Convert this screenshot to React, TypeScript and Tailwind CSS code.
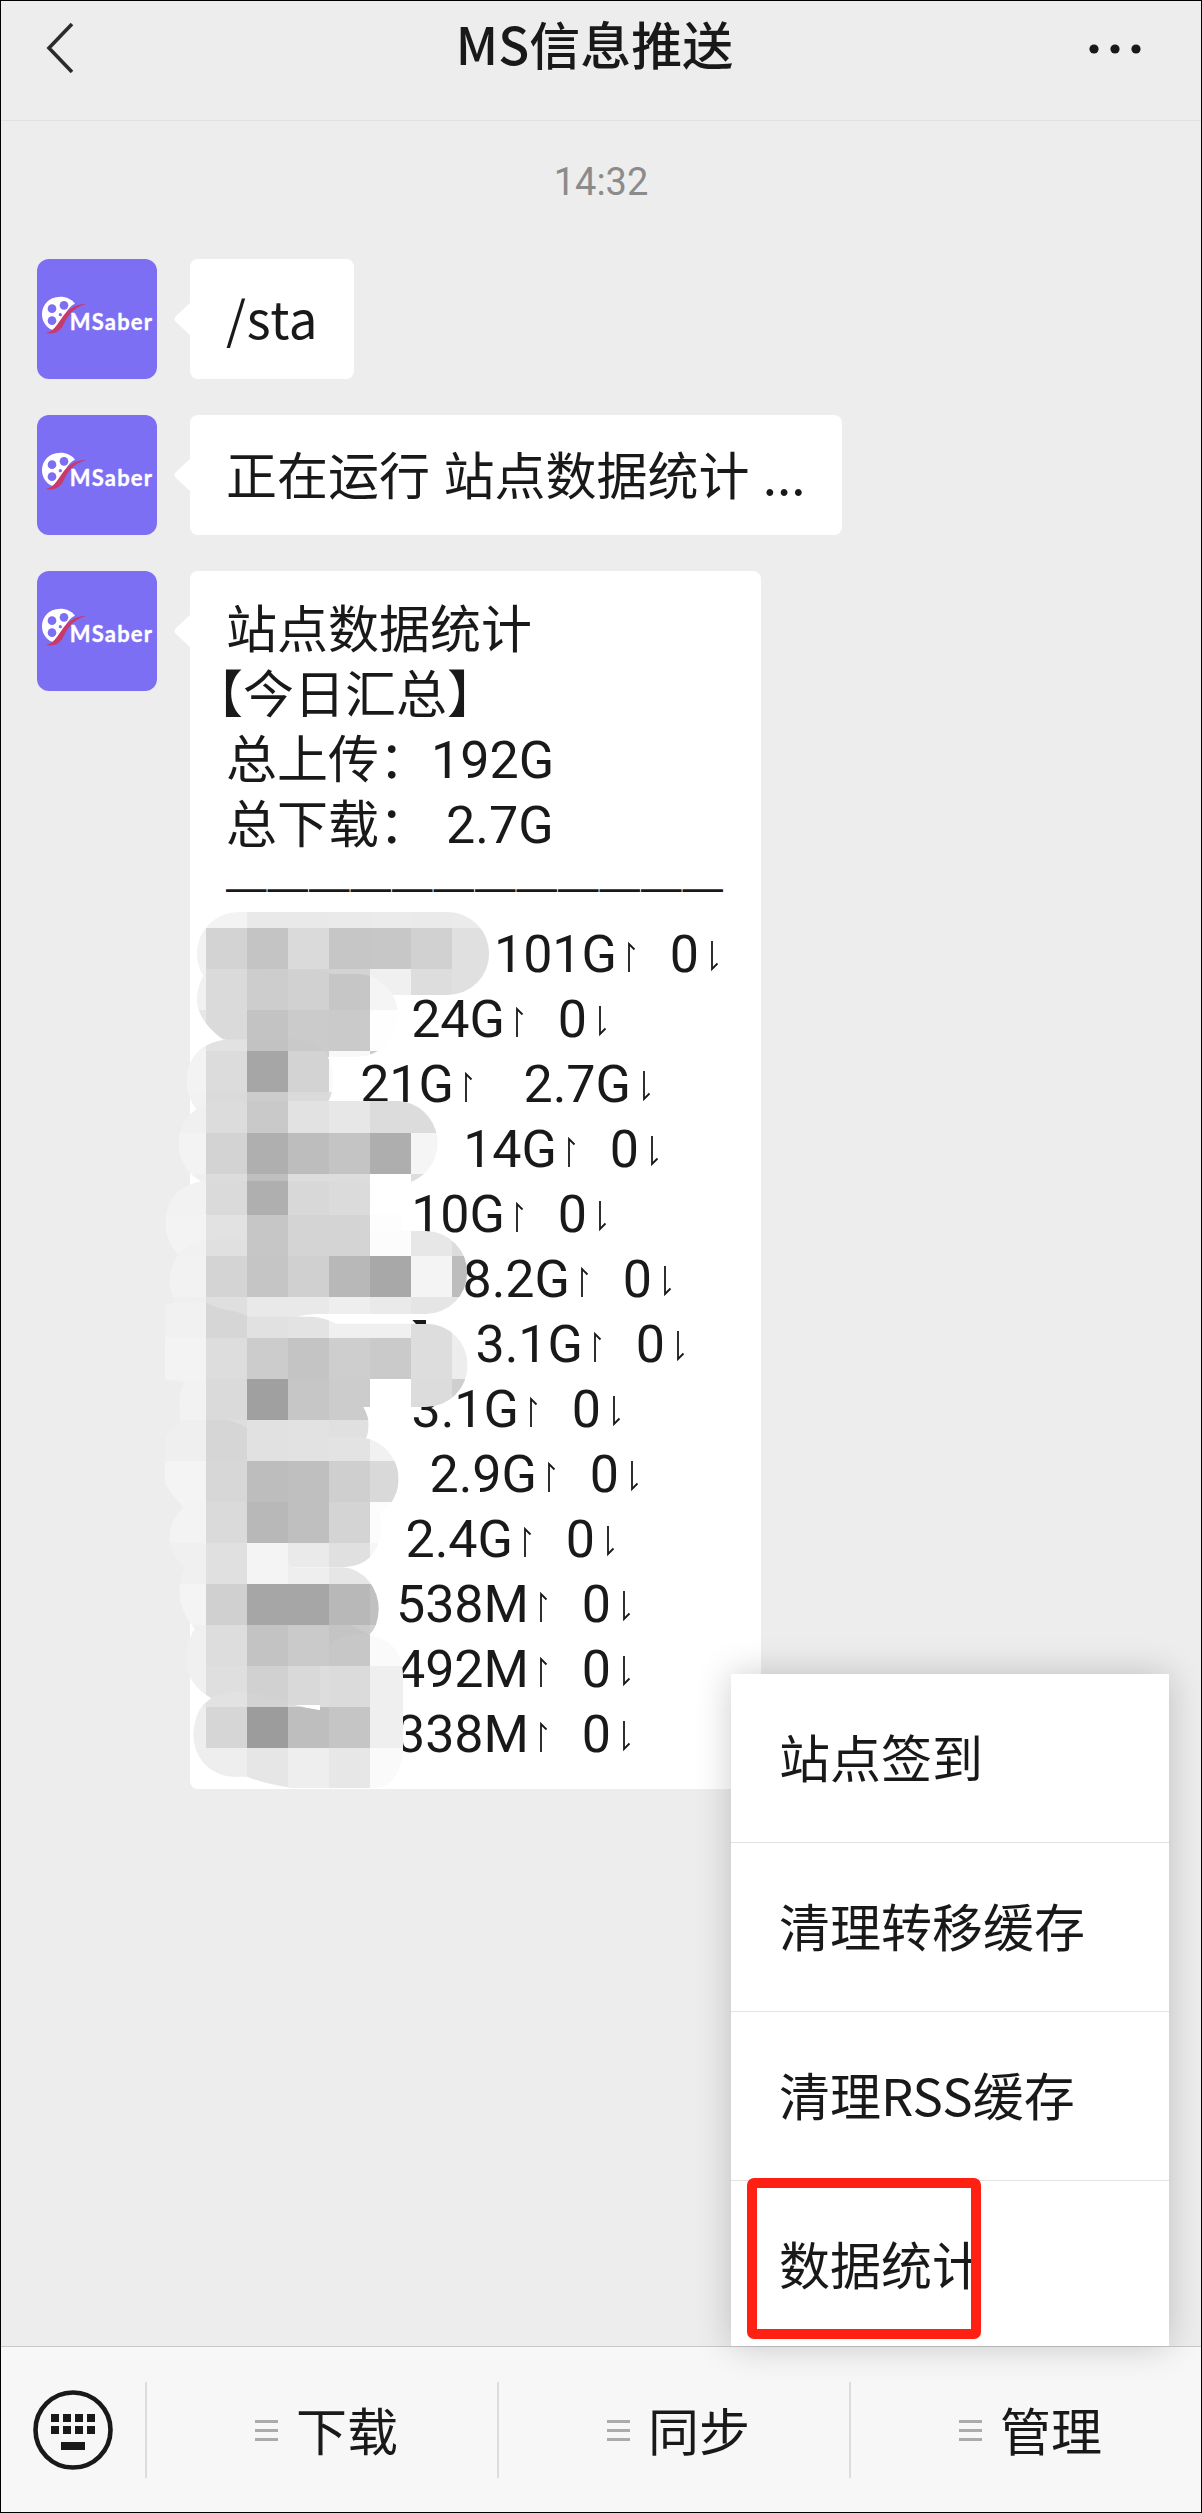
import React from "react";

type Stroke = { d: string; rows: [number, string][] };

/* Each row: [row index, two-digit grey levels for the eight columns]. */
const STROKES: Stroke[] = [
  {
    d: "M265 36H893A124.5 124.5 0 0 1 893 285H265A124.5 124.5 0 0 1 265 36Z",
    rows: [
      [0, "f3 f3 e9 e9 ea eb ea eb"],
      [1, "f2 d3 c4 da c6 c7 d1 e0"],
      [2, "f2 da ce d3 d3 f0 dd e0"],
    ],
  },
  {
    d: "M140 295Q145 250 160 228Q200 207 265 207L500 210Q530 214 545 222H620A124.5 124.5 0 0 1 620 471H530L218 418Q140 360 140 295Z",
    rows: [
      [2, "f1 da cd d1 c6 f5 ff ff"],
      [3, "e6 da c3 cb ca fe ff ff"],
      [4, "f2 dc c3 d0 f8 cc ff ff"],
    ],
  },
  {
    d: "M235 418H450Q500 425 530 465Q551 500 551 540Q549 580 535 604H400V640H150Q110 600 110 540Q115 430 235 418Z",
    rows: [
      [3, "f2 e2 c2 c9 ca ff ff ff"],
      [4, "f3 dc a6 d3 fa ff ff ff"],
      [5, "f2 da cc da dd ff ff ff"],
    ],
  },
  {
    d: "M214 603H746A126 126 0 0 1 783 846V860H214A128 128 0 0 1 214 603Z",
    rows: [
      [5, "f0 dc c9 e2 e7 dc dc ff"],
      [6, "f3 d3 af bd c4 ae f5 ff"],
      [7, "f0 dc bf dd dd ff dd ff"],
    ],
  },
  {
    d: "M168 842H783V860H755V1100H120Q46 1040 46 970Q50 855 168 842Z",
    rows: [
      [7, "f2 da af d8 db ff ff ff"],
      [8, "f3 e2 c6 d4 d4 fd ff ff"],
    ],
  },
  {
    d: "M190 1018H640V993H827A124.5 124.5 0 0 1 827 1242H500Q460 1243 430 1255H110Q58 1190 58 1140Q68 1026 190 1018Z",
    rows: [
      [8, "f1 e0 c6 d4 d4 fc e7 dc"],
      [9, "f2 d4 c5 d0 b8 a8 f4 bd"],
      [10, "ef df e9 e9 ee ea e5 e5"],
    ],
  },
  {
    d: "M45 1212Q100 1200 168 1206Q200 1228 250 1233Q280 1242 300 1250H490Q530 1255 558 1271H828A125 125 0 0 1 828 1521H200L168 1449Q80 1449 45 1437Z",
    rows: [
      [10, "f1 d6 e1 e3 f0 f0 dd ee"],
      [11, "f3 dd cc c4 ce ca dd ed"],
      [12, "f1 da a0 c6 cc ff dc cf"],
    ],
  },
  {
    d: "M88 1520Q88 1470 105 1437H640V1521Q656 1550 656 1570Q656 1600 648 1615H100Q88 1570 88 1520Z",
    rows: [
      [12, "f2 da a0 c6 cc ff dc cf"],
      [13, "f2 de e1 e2 e0 fe ff ff"],
    ],
  },
  {
    d: "M45 1615Q80 1550 165 1549Q260 1560 291 1584L430 1612H625A125 125 0 0 1 725 1806L690 1840H120Q70 1795 45 1750Z",
    rows: [
      [13, "ef d6 e1 e2 e3 f1 ff ff"],
      [14, "f4 d7 bd bf cf d9 ff ff"],
      [15, "f3 da b8 bf d4 fc ff ff"],
    ],
  },
  {
    d: "M120 1806H680Q693 1850 693 1880Q690 1995 580 2002H105Q58 1960 58 1910Q60 1850 120 1806Z",
    rows: [
      [15, "f3 da b8 bf d4 fc ff ff"],
      [16, "f0 e0 f4 ea e0 f6 ff ff"],
    ],
  },
  {
    d: "M88 2070Q90 1990 160 1960H380L430 2002H580A115 125 0 0 1 686 2130Q684 2180 658 2205H150Q88 2140 88 2070Z",
    rows: [
      [16, "f0 e0 f4 ee e6 ee ff ff"],
      [17, "f4 d0 a6 a6 b8 c0 ff ff"],
      [18, "f0 dd c3 ca cb d0 ff ff"],
    ],
  },
  {
    d: "M145 2175H600L660 2205V2421H220L184 2395Q108 2350 108 2280Q110 2210 145 2175Z",
    rows: [
      [18, "f0 dd c3 ca c4 c4 ff ff"],
      [19, "f0 df d1 d9 dc dc ff ff"],
    ],
  },
  {
    d: "M620 2202Q759 2205 759 2330V2560Q745 2655 680 2665H430Q340 2650 291 2630H250A120 125 0 0 1 130 2500Q135 2385 250 2375Q330 2375 420 2415L510 2430V2300Q520 2210 620 2202Z",
    rows: [
      [18, "f0 dd c3 ca c7 fa ff ff"],
      [19, "e8 e2 d3 dd db ef ff ff"],
      [20, "ee d6 9c be c5 ef ff ff"],
      [21, "ee ee e6 ee e7 fa ff ff"],
    ],
  },
];

function Mosaic() {
  return (
    <svg
      className="absolute -left-[40px] top-[329px] h-[900px] w-[350px]"
      viewBox="0 0 1050 2700"
      aria-hidden="true"
    >
      {STROKES.map((s, i) => (
        <g key={i}>
          <clipPath id={`stroke-${i}`}>
            <path d={s.d} />
          </clipPath>
          <g clipPath={`url(#stroke-${i})`} shapeRendering="crispEdges">
            {s.rows.map(([r, tones]) =>
              tones.split(" ").map((t, c) => (
                <rect
                  key={`${r}-${c}`}
                  x={45 + c * 123}
                  y={-39 + r * 123}
                  width="123"
                  height="123"
                  fill={`#${t}${t}${t}`}
                />
              )),
            )}
          </g>
        </g>
      ))}
      <path d="M432 2415H510V2430Z" fill="#fff" />
      <path d="M787 1260H828V1272H798Z" fill="#191919" />
    </svg>
  );
}

function Avatar() {
  return (
    <svg className="size-[120px] shrink-0 rounded-[12px] bg-[#7d6ff3]" viewBox="0 0 360 360">
      <path d="M46 213C-4 190 8 114 70 113C88 113 106 121 114 134C86 146 84 182 46 213Z" fill="#fff" />
      <circle cx="45" cy="149" r="13" fill="#7d6ff3" />
      <circle cx="81" cy="139" r="13" fill="#7d6ff3" />
      <circle cx="45" cy="185" r="13" fill="#7d6ff3" />
      <circle cx="70" cy="167" r="5" fill="#7d6ff3" />
      <path
        d="M26 221C72 218 66 138 148 134C104 148 90 176 80 196C70 216 52 230 26 221Z"
        fill="#c93a6b"
      />
      <text
        x="98"
        y="214"
        textLength="247"
        lengthAdjust="spacing"
        strokeWidth="1"
        strokeLinejoin="round"
        className="fill-white stroke-white font-[Lato,sans-serif] text-[66px] font-bold"
      >
        MSaber
      </text>
    </svg>
  );
}

function Message({ width, children }: { width: string; children: React.ReactNode }) {
  return (
    <div className="flex items-start gap-[33px]">
      <Avatar />
      <div className={`relative rounded-[8px] bg-white pl-[36px] ${width}`}>
        <svg className="absolute -left-[16px] top-[43px] h-[34px] w-[17px]" viewBox="0 0 17 34">
          <path d="M17 0V34L2 20Q-1 17 2 14Z" fill="#fff" />
        </svg>
        {children}
      </div>
    </div>
  );
}

function Harpoon({ down }: { down?: boolean }) {
  return (
    <svg className="mt-[22px] h-[31px] w-[8px] shrink-0" viewBox="0 0 8 31">
      {down ? (
        <path d="M1 0V28L6.5 22.5" fill="none" stroke="#191919" strokeWidth="1.8" />
      ) : (
        <path d="M1 31V3L6.5 8.5" fill="none" stroke="#191919" strokeWidth="1.8" />
      )}
    </svg>
  );
}

type Stat = { up: string; down: string; width: string; downWidth: string };

const STATS: Stat[] = [
  { up: "101G", down: "0", width: "w-[402px]", downWidth: "w-[75px]" },
  { up: "24G", down: "0", width: "w-[290px]", downWidth: "w-[75px]" },
  { up: "21G", down: "2.7G", width: "w-[239px]", downWidth: "w-[170px]" },
  { up: "14G", down: "0", width: "w-[342px]", downWidth: "w-[75px]" },
  { up: "10G", down: "0", width: "w-[290px]", downWidth: "w-[75px]" },
  { up: "8.2G", down: "0", width: "w-[355px]", downWidth: "w-[75px]" },
  { up: "3.1G", down: "0", width: "w-[368px]", downWidth: "w-[75px]" },
  { up: "3.1G", down: "0", width: "w-[304px]", downWidth: "w-[75px]" },
  { up: "2.9G", down: "0", width: "w-[322px]", downWidth: "w-[75px]" },
  { up: "2.4G", down: "0", width: "w-[298px]", downWidth: "w-[75px]" },
  { up: "538M", down: "0", width: "w-[314px]", downWidth: "w-[75px]" },
  { up: "492M", down: "0", width: "w-[314px]", downWidth: "w-[75px]" },
  { up: "338M", down: "0", width: "w-[314px]", downWidth: "w-[75px]" },
];

function StatRow({ up, down, width, downWidth }: Stat) {
  return (
    <div className="flex h-[65px] items-start font-[Roboto,sans-serif] text-[52px]">
      <div className={`${width} pt-[3px] pr-[11px] text-right`}>{up}</div>
      <Harpoon />
      <div className={`${downWidth} pt-[3px] pr-[12px] text-right`}>{down}</div>
      <Harpoon down />
    </div>
  );
}

function Tab({ label }: { label: string }) {
  return (
    <div className="flex h-[96px] w-[352px] items-center border-l-2 border-[#dcdcdc] pl-[108px]">
      <div className="flex w-[23px] flex-col gap-[6px]">
        <div className="h-[3px] bg-[#ababab]" />
        <div className="h-[3px] bg-[#ababab]" />
        <div className="h-[3px] bg-[#ababab]" />
      </div>
      <div className="ml-[18px] pb-[3px] text-[51px] leading-[60px]">{label}</div>
    </div>
  );
}

const MENU = ["站点签到", "清理转移缓存", "清理RSS缓存", "数据统计"];

export default function App() {
  return (
    <div className="flex h-[2513px] w-[1202px] flex-col overflow-hidden border border-black bg-[#ededed] font-['Noto_Sans_CJK_SC',sans-serif] whitespace-nowrap text-[#191919]">
      <header className="flex h-[120px] shrink-0 items-start justify-between border-b border-[#e1e1e1] pr-[57px] pl-[43px]">
        <svg className="mt-[20px] h-[54px] w-[32px]" viewBox="0 0 32 54">
          <path d="M28 3L5 27L28 51" fill="none" stroke="#2b2b2b" strokeWidth="3.6" />
        </svg>
        <h1 className="mt-[7px] ml-[25px] text-[51px] leading-[70px] font-medium">MS信息推送</h1>
        <svg className="mt-[38px] h-[20px] w-[56px]" viewBox="0 0 56 20">
          <circle cx="6" cy="10" r="4.6" fill="#191919" />
          <circle cx="27" cy="10" r="4.6" fill="#191919" />
          <circle cx="48" cy="10" r="4.6" fill="#191919" />
        </svg>
      </header>

      <main className="h-[2225px] shrink-0 pl-[36px]">
        <div className="mr-[36px] h-[138px] pt-[34px] text-center font-[Roboto,sans-serif] text-[38px] leading-[54px] text-[#8b8b8b]">
          14:32
        </div>
        <div className="flex flex-col gap-[36px] text-[51px] leading-[65px]">
          <Message width="w-[164px] h-[120px] pt-[26px] tracking-[0.7px]">/sta</Message>
          <Message width="w-[652px] h-[120px] pt-[26px] [word-spacing:2px]">正在运行 站点数据统计 ...</Message>
          <Message width="w-[571px] h-[1218px] pt-[23px]">
            <div>站点数据统计</div>
            <div className="-ml-[34px]">【今日汇总】</div>
            <div className="h-[65px]">
              总上传：
              <span className="ml-[1px] font-[Roboto,sans-serif] text-[52px] leading-none">192G</span>
            </div>
            <div className="h-[65px]">
              总下载：
              <span className="ml-[16px] font-[Roboto,sans-serif] text-[52px] leading-none">2.7G</span>
            </div>
            <div className="h-[65px] pt-px font-['Liberation_Sans',sans-serif] text-[40.5px] tracking-[1px]">
              ————————————
            </div>
            {STATS.map((s, i) => (
              <StatRow key={i} {...s} />
            ))}
            <Mosaic />
          </Message>
        </div>
      </main>

      <footer className="relative flex h-[166px] shrink-0 items-start border-t border-[#c8c8c8] bg-[#f7f7f7] pt-[35px]">
        <svg className="mt-[6px] mr-[32px] ml-[30px] size-[82px] shrink-0" viewBox="0 0 82 82">
          <circle cx="42" cy="42" r="37.5" fill="none" stroke="#191919" strokeWidth="4.6" />
          {[20, 32, 44, 56].map((x) => (
            <g key={x} fill="#191919">
              <rect x={x} y="26" width="8" height="8" />
              <rect x={x} y="38" width="8" height="8" />
            </g>
          ))}
          <rect x="30" y="54" width="24" height="8" fill="#191919" />
        </svg>
        <Tab label="下载" />
        <Tab label="同步" />
        <Tab label="管理" />

        <div className="absolute right-[32px] bottom-[166px] h-[672px] w-[438px] bg-white text-[51px] shadow-[0_0_34px_rgba(0,0,0,0.2)]">
          {MENU.map((m, i) => (
            <div
              key={m}
              className={`flex h-[169px] items-center pb-[4px] pl-[48px] ${i < 3 ? "border-b border-[#e2e2e2]" : ""}`}
            >
              {m}
            </div>
          ))}
          <div className="absolute top-[504px] left-[16px] h-[161px] w-[234px] rounded-[7px] border-[10px] border-[#ff2014]" />
        </div>
      </footer>
    </div>
  );
}
